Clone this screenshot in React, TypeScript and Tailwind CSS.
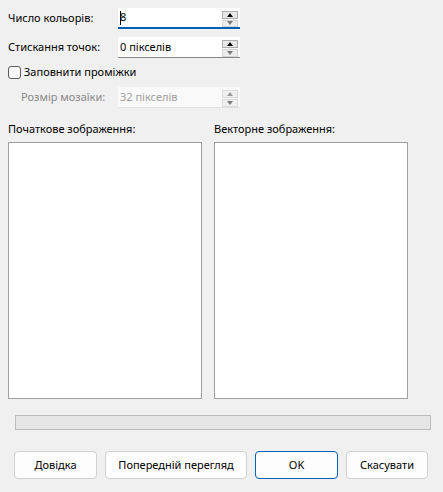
import React from 'react'

function Spinner({ disabled }: { disabled?: boolean }) {
  return (
    <div className="flex flex-col gap-px pt-[3px] pr-[2px]">
      <div
        className={`w-[16px] h-[8px] flex items-center justify-center border ${
          disabled ? 'border-[#dcdcdc] bg-[#f0f0f0]' : 'border-[#adadad] bg-[#e8e8e8]'
        }`}
      >
        <div
          className={`w-0 h-0 border-x-[3.5px] border-x-transparent border-b-[4px] ${
            disabled ? 'border-b-[#9a9a9a]' : 'border-b-black'
          }`}
        />
      </div>
      <div
        className={`w-[16px] h-[8px] flex items-center justify-center border ${
          disabled ? 'border-[#dcdcdc] bg-[#f0f0f0]' : 'border-[#d4d4d4] bg-[#ececec]'
        }`}
      >
        <div className="w-0 h-0 border-x-[3.5px] border-x-transparent border-t-[4px] border-t-[#7a7a7a]" />
      </div>
    </div>
  )
}

function SpinBox({
  value,
  focused,
  disabled,
}: {
  value: string
  focused?: boolean
  disabled?: boolean
}) {
  return (
    <div
      className={`flex w-[122px] h-[21px] ${
        disabled ? 'bg-[#f9f9f9] border-b border-[#e0e0e0]' : 'bg-white'
      } ${focused ? 'border-b-2 border-[#005fb8]' : ''} ${
        !focused && !disabled ? 'border-b border-[#868686]' : ''
      }`}
    >
      <div className={`flex-1 flex items-center pl-[2px] ${disabled ? 'text-[#a0a0a0]' : 'text-black'}`}>
        {focused && <span className="w-px h-[14px] bg-black -mr-px" />}
        {value}
      </div>
      <Spinner disabled={disabled} />
    </div>
  )
}

function Button({ children, primary, width }: { children: React.ReactNode; primary?: boolean; width: string }) {
  return (
    <button
      className={`${width} h-[28px] rounded-[4px] bg-[#fdfdfd] border ${
        primary ? 'border-[#005fb8]' : 'border-[#d0d0d0]'
      } text-black text-[11px]`}
    >
      {children}
    </button>
  )
}

export default function App() {
  return (
    <div
      className="w-[443px] h-[492px] bg-[#f0f0f0] text-[11px] text-black px-2 pt-2"
      style={{ fontFamily: '"Noto Sans", "Open Sans", sans-serif' }}
    >
      <div className="flex items-center h-[21px]">
        <span className="w-[110px]">Число кольорів:</span>
        <SpinBox value="8" focused />
      </div>

      <div className="flex items-center h-[21px] mt-[8px]">
        <span className="w-[110px]">Стискання точок:</span>
        <SpinBox value="0 пікселів" />
      </div>

      <div className="flex items-center gap-[3px] h-[15px] mt-[7px]">
        <div className="w-[13px] h-[13px] rounded-[3px] border border-[#5c5c5c] bg-[#f7f7f7]" />
        <span>Заповнити проміжки</span>
      </div>

      <div className="flex items-center h-[21px] mt-[7px]">
        <span className="w-[110px] pl-[13px] text-[#8a8a8a]">Розмір мозаїки:</span>
        <SpinBox value="32 пікселів" disabled />
      </div>

      <div className="flex gap-[12px] mt-[13px]">
        <div className="flex flex-col w-[194px]">
          <span className="h-[15px] leading-[15px]">Початкове зображення:</span>
          <div className="mt-[6px] h-[257px] bg-white border border-[#a0a0a0]" />
        </div>
        <div className="flex flex-col w-[194px]">
          <span className="h-[15px] leading-[15px]">Векторне зображення:</span>
          <div className="mt-[6px] h-[257px] bg-white border border-[#a0a0a0]" />
        </div>
      </div>

      <div className="ml-[7px] mt-[16px] w-[416px] h-[15px] bg-[#e6e6e6] border border-[#bcbcbc]" />

      <div className="flex gap-[8px] ml-[6px] mt-[21px]">
        <Button width="w-[83px]">Довідка</Button>
        <Button width="w-[142px]">Попередній перегляд</Button>
        <Button width="w-[83px]" primary>
          OK
        </Button>
        <Button width="w-[82px]">Скасувати</Button>
      </div>
    </div>
  )
}
